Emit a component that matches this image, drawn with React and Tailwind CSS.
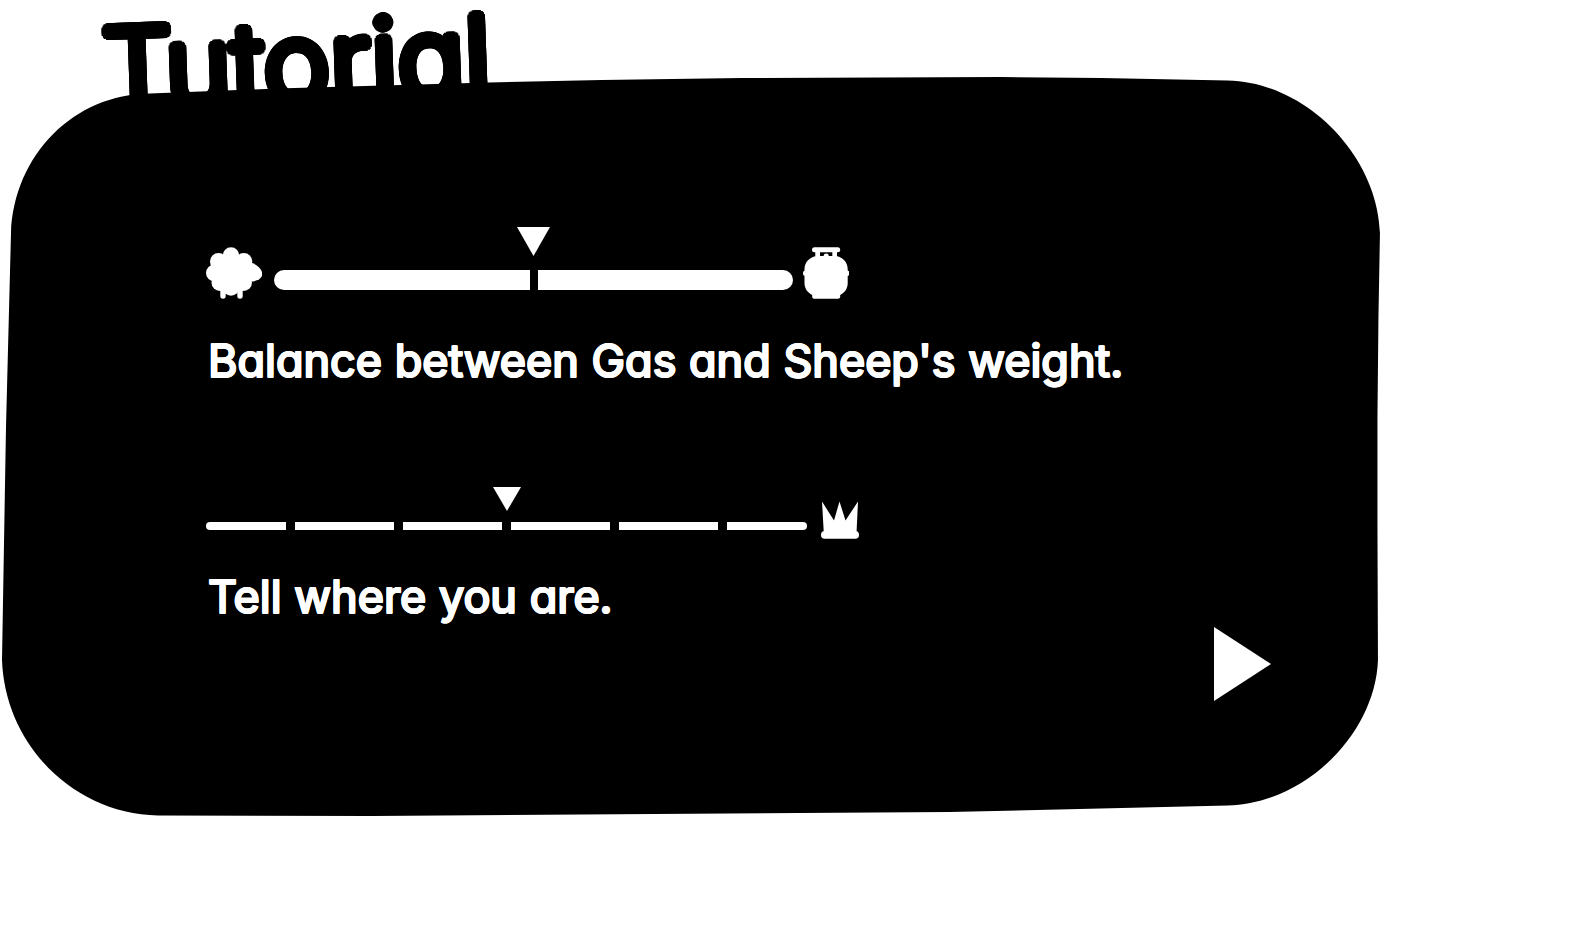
import React from "react";

const captionText =
  "pl-[2px] font-['Inter',sans-serif] text-[45px] leading-14 font-normal [font-feature-settings:'cv11'] [-webkit-text-stroke:2px_white] [text-shadow:1px_0_white,-1px_0_white,0_1px_white,0_-1px_white]";

const titleText =
  "font-['Inter',sans-serif] text-[112px] leading-[124px] font-light text-black [font-feature-settings:'cv11'] [text-shadow:5px_0_black,-5px_0_black,0_5px_black,0_-5px_black,4px_3px_black,-4px_3px_black,4px_-3px_black,-4px_-3px_black,3px_4px_black,-3px_4px_black,3px_-4px_black,-3px_-4px_black,5px_1px_black,5px_-1px_black,-5px_1px_black,-5px_-1px_black,1px_5px_black,-1px_5px_black,1px_-5px_black,-1px_-5px_black,2px_0_black,-2px_0_black]";

function PanelShape() {
  return (
    <svg
      className="absolute inset-0 -z-10 h-full w-full"
      viewBox="0 0 1379 739"
      preserveAspectRatio="none"
      aria-hidden="true"
    >
      <path d="M9 156C12 78 72 17 148 16.500L211 14 275 11.500 487 5.500 600 3 740 1 1000 0 1100 1 1226 3.500C1304 5 1376 78 1378.500 156L1377 240 1376 340 1376 450 1376.500 583C1374 656 1304 727 1226 728.500L948 735 370 739 156 738.500C72 737 3 668 0 583L4 350Z" />
    </svg>
  );
}

function Pointer({ className }) {
  return (
    <svg className={className} viewBox="0 0 32 29" preserveAspectRatio="none" fill="currentColor" aria-hidden="true">
      <path d="M0 0H32L16 29Z" />
    </svg>
  );
}

function SheepIcon() {
  return (
    <svg className="h-[52px] w-14 shrink-0" viewBox="0 0 56 52" fill="currentColor" aria-hidden="true">
      <circle cx="25" cy="8.500" r="8.300" />
      <circle cx="12.500" cy="14.500" r="8.500" />
      <circle cx="37.800" cy="14.500" r="8.500" />
      <circle cx="8.500" cy="26" r="8.500" />
      <circle cx="14" cy="35.500" r="8.500" />
      <circle cx="37.500" cy="35.500" r="8.500" />
      <circle cx="25" cy="40.500" r="8.300" />
      <circle cx="25" cy="25" r="17" />
      <path d="M36 15.500H45C51 17.500 56.300 22.500 56.300 27C56.300 31.500 51 34.500 44 34.500H36Z" />
      <rect x="14.300" y="38" width="5.400" height="13.700" rx="2.600" />
      <rect x="31.300" y="38" width="5.400" height="13.700" rx="2.600" />
    </svg>
  );
}

function GasTankIcon() {
  return (
    <svg className="h-[52px] w-[46px] shrink-0" viewBox="0 0 46 52" fill="currentColor" aria-hidden="true">
      <rect x="9" y="0.300" width="28.200" height="5" rx="2.500" />
      <path d="M12.300 4H17V11H12.300ZM29.300 4H34V11H29.300Z" />
      <circle cx="23.200" cy="9.200" r="2.600" />
      <path d="M13.500 9H33C39.500 10 44.700 15 44.700 22V36C44.700 41.500 42 45.500 37.200 48V50Q37 51.700 35 51.700H11Q9.300 51.700 9.200 50V48C4.500 45.500 1.500 41.500 1.500 36V22C1.500 15 7 10 13.500 9Z" />
      <rect x="0" y="23.500" width="46.500" height="5.500" rx="2.500" />
    </svg>
  );
}

function CrownIcon() {
  return (
    <svg className="size-[38px] shrink-0" viewBox="0 0 38 38" fill="currentColor" aria-hidden="true">
      <path d="M1 0.500L13 19.500 18.500 0.500 24.500 19.500 37 0.500 35.500 32H2.800Z" />
      <rect x="0" y="30" width="38" height="7.700" rx="3.800" />
    </svg>
  );
}

function BalanceGauge() {
  return (
    <div className="flex w-full max-w-[643px] items-end" role="meter" aria-label="Balance" aria-valuemin={0} aria-valuemax={100} aria-valuenow={50}>
      <SheepIcon />
      <div className="mr-[10px] ml-3 flex flex-1 flex-col items-center pb-[9px]">
        <Pointer className="mb-[14px] h-[29px] w-[33px]" />
        <div className="flex w-full gap-2">
          <span className="h-5 flex-1 rounded-l-full bg-white" />
          <span className="h-5 flex-1 rounded-r-full bg-white" />
        </div>
      </div>
      <GasTankIcon />
    </div>
  );
}

function ProgressGauge() {
  return (
    <div className="flex w-full max-w-[653px] items-end" role="meter" aria-label="Progress" aria-valuemin={0} aria-valuemax={100} aria-valuenow={50}>
      <div className="mr-[14px] flex flex-1 flex-col items-center pb-[9px]">
        <Pointer className="mb-[11px] h-6 w-7" />
        <div className="flex w-full gap-[9px]">
          <span className="h-2 flex-[80] rounded-l-full bg-white" />
          <span className="h-2 flex-[99] bg-white" />
          <span className="h-2 flex-[99] bg-white" />
          <span className="h-2 flex-[99] bg-white" />
          <span className="h-2 flex-[99] bg-white" />
          <span className="h-2 flex-[80] rounded-r-full bg-white" />
        </div>
      </div>
      <CrownIcon />
    </div>
  );
}

export default function App() {
  return (
    <main className="min-h-screen bg-white">
      <header className="relative z-10 h-[77px] pl-[102px]">
        <h1 className={`${titleText} w-max -rotate-2`}>Tutorial</h1>
      </header>
      <section className="relative isolate ml-[2px] w-[87.300%] pt-[150px] pr-[109px] pb-[115px] pl-[204px] text-white">
        <PanelShape />
        <BalanceGauge />
        <p className={`${captionText} mt-[34px]`}>Balance between Gas and Sheep's weight.</p>
        <div className="mt-[98px]">
          <ProgressGauge />
        </div>
        <p className={`${captionText} mt-[30px]`}>Tell where you are.</p>
        <div className="mt-[2px] flex justify-end">
          <button type="button" aria-label="Next" className="cursor-pointer">
            <svg className="block h-[74px] w-[57px]" viewBox="0 0 57 74" fill="currentColor" aria-hidden="true">
              <path d="M0 0L57 37 0 74Z" />
            </svg>
          </button>
        </div>
      </section>
    </main>
  );
}
